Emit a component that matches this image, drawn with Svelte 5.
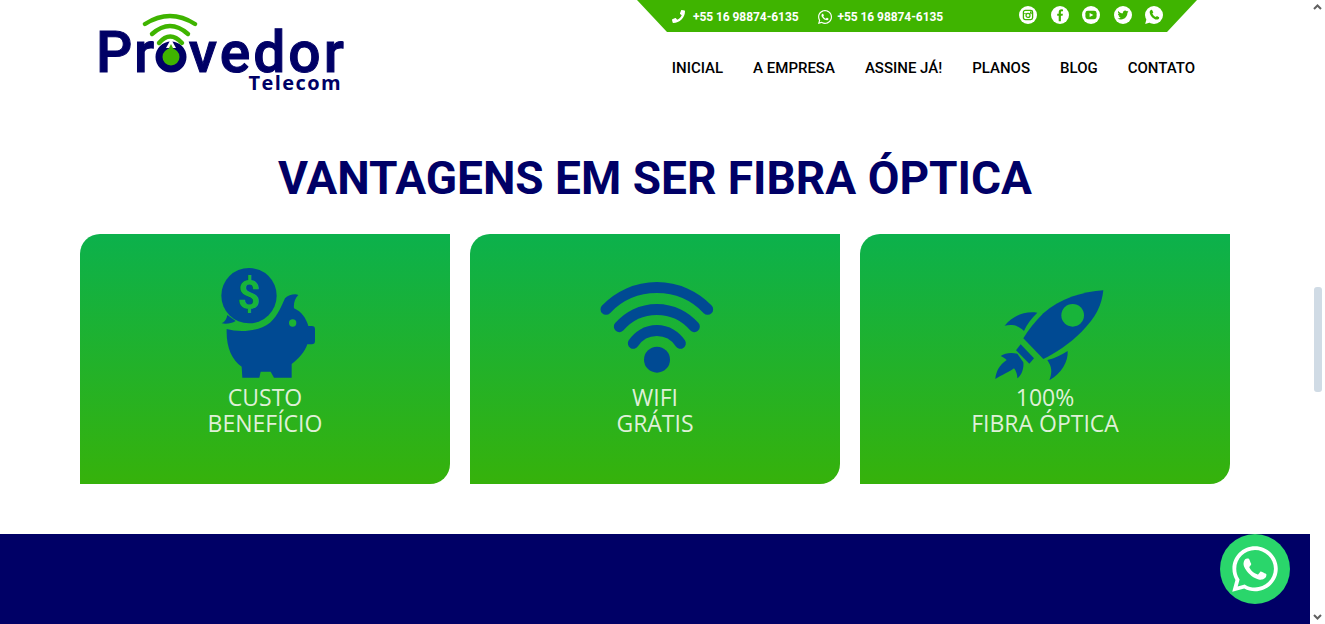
<script>
  const wa = "M380.9 97.1C339 55.1 283.2 32 223.9 32c-122.4 0-222 99.6-222 222 0 39.1 10.2 77.3 29.6 111L0 480l117.7-30.9c32.4 17.7 68.9 27 106.1 27h.1c122.3 0 224.1-99.6 224.1-222 0-59.3-25.2-115-67.1-157zm-157 341.6c-33.2 0-65.7-8.9-94-25.7l-6.7-4-69.8 18.3L72 359.2l-4.4-7c-18.5-29.4-28.2-63.3-28.2-98.2 0-101.7 82.8-184.5 184.6-184.5 49.3 0 95.6 19.2 130.4 54.1 34.8 34.9 56.2 81.2 56.1 130.5 0 101.8-84.9 184.6-186.6 184.6zm101.2-138.2c-5.5-2.8-32.8-16.2-37.9-18-5.1-1.9-8.8-2.8-12.5 2.8-3.7 5.6-14.3 18-17.6 21.8-3.2 3.7-6.5 4.2-12 1.4-32.6-16.3-54-29.1-75.5-66-5.7-9.8 5.7-9.1 16.3-30.3 1.8-3.7.9-6.9-.5-9.7-1.4-2.8-12.5-30.1-17.1-41.2-4.5-10.8-9.1-9.3-12.5-9.5-3.2-.2-6.9-.2-10.6-.2-3.7 0-9.7 1.4-14.8 6.9-5.1 5.6-19.4 19-19.4 46.3 0 27.3 19.9 53.7 22.6 57.4 2.8 3.7 39.1 59.7 94.8 83.8 35.2 15.2 49 16.5 66.6 13.9 10.7-1.6 32.8-13.4 37.4-26.4 4.6-13 4.6-24.1 3.2-26.4-1.3-2.5-5-3.9-10.5-6.6z";
  const phone = "M493.4 24.6l-104-24c-11.3-2.6-22.9 3.3-27.5 13.9l-48 112c-4.2 9.8-1.4 21.3 6.9 28l60.6 49.6c-36 76.7-98.9 140.5-177.2 177.2l-49.6-60.6c-6.8-8.3-18.2-11.1-28-6.9l-112 48C3.9 366.5-2 378.1.6 389.4l24 104C27.1 504.2 36.7 512 48 512c256.1 0 464-207.5 464-464 0-11.2-7.7-20.9-18.6-23.4z";
  const bird = "M459.37 151.716c.325 4.548.325 9.097.325 13.645 0 138.72-105.583 298.558-298.558 298.558-59.452 0-114.68-17.219-161.137-47.106 8.447.974 16.568 1.299 25.34 1.299 49.055 0 94.213-16.568 130.274-44.832-46.132-.975-84.792-31.188-98.112-72.772 6.498.974 12.995 1.624 19.818 1.624 9.421 0 18.843-1.3 27.614-3.573-48.081-9.747-84.143-51.98-84.143-102.985v-1.299c13.969 7.797 30.214 12.67 47.431 13.319-28.264-18.843-46.781-51.005-46.781-87.391 0-19.492 5.197-37.36 14.294-52.954 51.655 63.675 129.3 105.258 216.365 109.807-1.624-7.797-2.599-15.918-2.599-24.04 0-57.828 46.782-104.934 104.934-104.934 30.213 0 57.502 12.67 76.67 33.137 23.715-4.548 46.456-13.32 66.599-25.34-7.798 24.366-24.366 44.833-46.132 57.827 21.117-2.273 41.584-8.122 60.426-16.243-14.292 20.791-32.161 39.308-52.628 54.253z";
  const nav = ["INICIAL", "A EMPRESA", "ASSINE JÁ!", "PLANOS", "BLOG", "CONTATO"];
</script>

<div class="page">
  <main class="main">
    <header class="header">
      <div class="logo">
        <div class="logo-word">
          <span>Pr</span>
          <svg class="logo-o" viewBox="0 0 32 32" width="32" height="32">
            <circle cx="16" cy="16" r="12" fill="#3fb400" stroke="#000066" stroke-width="7"/>
            <path d="M16 -2 L11 7 H21 Z" fill="#fff"/>
            <path d="M16 3 L12.5 10 H19.5 Z" fill="#3fb400"/>
          </svg>
          <span class="rest">vedor</span>
        </div>
        <svg class="logo-wifi" viewBox="0 0 60 36" width="60" height="36" fill="none" stroke="#3fb400" stroke-linecap="round" stroke-width="4.4">
          <path d="M5 12 Q30 -4 55 12"/>
          <path d="M12 22 Q30 6 48 22"/>
          <path d="M19 31 Q30 18 42 31"/>
        </svg>
        <div class="logo-sub">Telecom</div>
      </div>

      <div class="head-right">
        <div class="topbar">
          <div class="contact">
            <svg width="13" height="13" viewBox="0 0 512 512"><path d={phone} fill="#fff"/></svg>
            <span>+55 16 98874-6135</span>
          </div>
          <div class="contact">
            <svg width="14" height="16" viewBox="0 0 448 512"><path d={wa} fill="#fff"/></svg>
            <span>+55 16 98874-6135</span>
          </div>
          <div class="socials">
            <svg width="18" height="18" viewBox="0 0 18 18">
              <circle cx="9" cy="9" r="9" fill="#fff"/>
              <rect x="4.4" y="4.4" width="9.2" height="9.2" rx="1.8" fill="none" stroke="#3fb400" stroke-width="1.3"/>
              <circle cx="9" cy="9.4" r="2" fill="none" stroke="#3fb400" stroke-width="1.2"/>
              <rect x="11" y="5.4" width="1.6" height="1.6" fill="#3fb400"/>
              <path d="M4.6 7.6H13.4" stroke="#3fb400" stroke-width=".8"/>
            </svg>
            <svg width="18" height="18" viewBox="0 0 18 18">
              <circle cx="9" cy="9" r="9" fill="#fff"/>
              <path d="M7.7 15.2V9.8H6.2V7.8H7.7V6.3C7.7 4.3 8.8 3.3 10.5 3.3L12 3.4V5.3H11C10.2 5.3 9.9 5.7 9.9 6.4V7.8H11.9L11.6 9.8H9.9V15.2Z" fill="#3fb400"/>
            </svg>
            <svg width="18" height="18" viewBox="0 0 18 18">
              <circle cx="9" cy="9" r="9" fill="#fff"/>
              <rect x="3.4" y="4.8" width="11.2" height="8.4" rx="2.4" fill="#3fb400"/>
              <path d="M7.6 6.9L11.4 9L7.6 11.1Z" fill="#fff"/>
            </svg>
            <svg width="18" height="18" viewBox="0 0 18 18">
              <circle cx="9" cy="9" r="9" fill="#fff"/>
              <path d={bird} fill="#3fb400" transform="translate(3.5 3.5) scale(.0215)"/>
            </svg>
            <svg width="18" height="18" viewBox="0 0 18 18">
              <circle cx="9" cy="9" r="9" fill="#fff"/>
              <path d="M1.5 13L0.2 18L5 16.5Z" fill="#fff"/>
              <path d="M6.3 3.8C5.3 4.3 4.6 5.2 4.7 6.4C5 9.6 8.4 13.2 11.6 13.6C12.9 13.7 13.8 13 14.2 12L14.1 11.3L11.9 10.1L10.9 11.1C9.5 10.6 7.9 9 7.3 7.5L8.3 6.5L7.1 4Z" fill="#3fb400"/>
            </svg>
          </div>
        </div>
        <nav class="nav">
          {#each nav as item}
            <span>{item}</span>
          {/each}
        </nav>
      </div>
    </header>

    <section class="perks">
      <h1>VANTAGENS EM SER FIBRA ÓPTICA</h1>
      <div class="cards">
        <article class="card">
          <svg class="icon" viewBox="0 0 570 375" width="190" height="125">
            <path d="M172 180 C170 192 165 200 155 205 C170 208 185 205 197 198Z" fill="#004a93"/>
            <circle cx="237" cy="122" r="83" fill="#004a93"/>
            <text x="237" y="163" text-anchor="middle" class="dollar">$</text>
            <path d="M170 222 C205 232 262 232 300 203 C325 182 335 150 345 130 C355 120 375 115 385 120 C375 130 370 145 372 160 C395 170 408 190 415 213 L425 213 Q435 213 435 223 L435 258 Q435 268 425 268 L412 268 C405 290 385 312 365 327 L365 368 L312 368 L302 350 L272 350 L268 368 L217 368 L215 335 C185 315 168 275 170 222Z" fill="#004a93"/>
            <circle cx="368" cy="204" r="11" fill="#1cb432"/>
          </svg>
          <p class="label">CUSTO<br />BENEFÍCIO</p>
        </article>
        <article class="card">
          <svg class="icon" viewBox="0 0 570 375" width="190" height="125">
            <g transform="translate(30 30)" fill="none" stroke="#004a93" stroke-width="33" stroke-linecap="round">
              <path d="M108 133 A211 211 0 0 1 413 133"/>
              <path d="M148 185 A148 148 0 0 1 373 185"/>
              <path d="M190 235 A84 84 0 0 1 331 235"/>
              <circle cx="261" cy="284" r="39" fill="#004a93" stroke="none"/>
            </g>
          </svg>
          <p class="label">WIFI<br />GRÁTIS</p>
        </article>
        <article class="card">
          <svg class="icon" viewBox="0 0 570 375" width="190" height="125">
            <g transform="translate(30 60)" fill="#004a93">
              <path d="M430 46 C370 50 300 70 250 115 C225 140 205 165 190 190 L250 252 C285 235 330 205 365 170 C410 125 425 90 430 46Z"/>
              <circle cx="338" cy="121" r="34" fill="#18b43a"/>
              <path d="M232 113 C195 108 160 120 134 152 C155 148 175 150 192 168 C200 148 215 130 232 113Z"/>
              <path d="M323 228 C325 260 305 295 268 316 C278 290 275 275 262 255 C285 250 305 240 323 228Z"/>
              <path d="M182 208 L222 250 L208 266 L168 226Z"/>
              <path d="M122 243 C135 233 155 232 172 236 L190 262 C192 280 185 300 172 310 C172 297 168 288 162 280 C150 290 125 300 106 312 C108 290 118 270 140 255 C135 250 128 246 122 243Z"/>
            </g>
          </svg>
          <p class="label">100%<br />FIBRA ÓPTICA</p>
        </article>
      </div>
    </section>

    <div class="band"></div>
  </main>

  <aside class="scrollbar">
    <svg width="9" height="6" viewBox="0 0 9 6"><path d="M1 5L4.5 1.5L8 5" fill="none" stroke="#606060" stroke-width="2"/></svg>
    <div class="thumb"></div>
    <svg class="down" width="9" height="6" viewBox="0 0 9 6"><path d="M1 1L4.5 4.5L8 1" fill="none" stroke="#606060" stroke-width="2"/></svg>
  </aside>

  <div class="float-wa">
    <svg width="46" height="52" viewBox="0 0 448 512"><path d={wa} fill="#fff"/></svg>
  </div>
</div>

<style>
  :global(body) {
    margin: 0;
    background: #fff;
  }
  .page {
    display: flex;
    height: 624px;
    overflow: hidden;
    font-family: Roboto, "Liberation Sans", sans-serif;
  }
  .main {
    flex: 0 0 1310px;
    display: flex;
    flex-direction: column;
  }
  .header {
    display: flex;
    justify-content: space-between;
    height: 104px;
    padding: 0 113px 0 98px;
    box-sizing: border-box;
  }
  .logo {
    position: relative;
    width: 248px;
    height: 92px;
    padding-top: 25px;
    box-sizing: border-box;
    color: #000066;
  }
  .logo-wifi {
    position: absolute;
    left: 42px;
    top: 12px;
  }
  .logo-word {
    display: flex;
    align-items: flex-end;
    margin-left: -2px;
    font-size: 57px;
    line-height: 56px;
    font-weight: 500;
    letter-spacing: 1.6px;
    -webkit-text-stroke: 1px #000066;
    height: 56px;
  }
  .rest {
    letter-spacing: 3px;
  }
  .logo-o {
    margin: 0 2px 8px -1px;
    flex: none;
    overflow: visible;
  }
  .logo-sub {
    position: absolute;
    right: 4px;
    top: 70px;
    font-family: "Open Sans", sans-serif;
    font-size: 20px;
    line-height: 26px;
    font-weight: 700;
    letter-spacing: 1.4px;
  }
  .head-right {
    width: 560px;
    display: flex;
    flex-direction: column;
    align-items: stretch;
  }
  .topbar {
    height: 32px;
    background: #3fb400;
    clip-path: polygon(0 0, 100% 0, 530px 100%, 30px 100%);
    display: flex;
    align-items: center;
    padding-left: 35px;
    box-sizing: border-box;
    color: #fff;
    font-size: 12px;
    font-weight: 700;
    letter-spacing: -0.07px;
  }
  .contact {
    display: flex;
    align-items: center;
    gap: 8px;
    margin-right: 19px;
    margin-top: 1px;
  }
  .contact + .contact {
    gap: 6px;
  }
  .socials {
    display: flex;
    gap: 13.5px;
    margin-left: 57px;
    margin-top: -2px;
  }
  .socials svg,
  .contact svg {
    display: block;
    flex: none;
  }
  .nav {
    display: flex;
    justify-content: flex-end;
    gap: 30px;
    margin-top: 26px;
    padding-right: 2px;
    color: #000;
    font-size: 15px;
    line-height: 20px;
    font-weight: 500;
  }
  .perks {
    height: 430px;
    box-sizing: border-box;
  }
  h1 {
    margin: 44px 0 0;
    text-align: center;
    color: #000066;
    font-size: 46px;
    line-height: 60px;
    font-weight: 700;
  }
  .cards {
    display: flex;
    gap: 20px;
    padding: 26px 80px 0;
  }
  .card {
    flex: 0 0 370px;
    height: 250px;
    box-sizing: border-box;
    padding-top: 21px;
    background: linear-gradient(#0cb14c, #36b20b);
    border-radius: 20px 0 20px 0;
    text-align: center;
  }
  .icon {
    display: block;
    margin: 0 auto;
    overflow: visible;
  }
  .dollar {
    font-family: Roboto, sans-serif;
    font-weight: 700;
    font-size: 120px;
    fill: #18b43a;
  }
  .label {
    margin: 4px 0 0;
    color: #dff0d8;
    font-family: "Open Sans", sans-serif;
    font-size: 23px;
    line-height: 26px;
    font-weight: 400;
  }
  .band {
    flex: 1;
    background: #000066;
  }
  .scrollbar {
    flex: 0 0 15px;
    display: flex;
    flex-direction: column;
    align-items: center;
    padding-top: 4px;
    box-sizing: border-box;
    background: #fff;
  }
  .thumb {
    width: 8px;
    height: 105px;
    margin-top: 277px;
    background: #d0dbe5;
    border-radius: 3px;
  }
  .down {
    margin-top: auto;
    margin-bottom: 4px;
  }
  .float-wa {
    position: fixed;
    left: 1220px;
    top: 534px;
    width: 70px;
    height: 70px;
    border-radius: 50%;
    background: #2ad66b;
    display: flex;
    align-items: center;
    justify-content: center;
  }
</style>
